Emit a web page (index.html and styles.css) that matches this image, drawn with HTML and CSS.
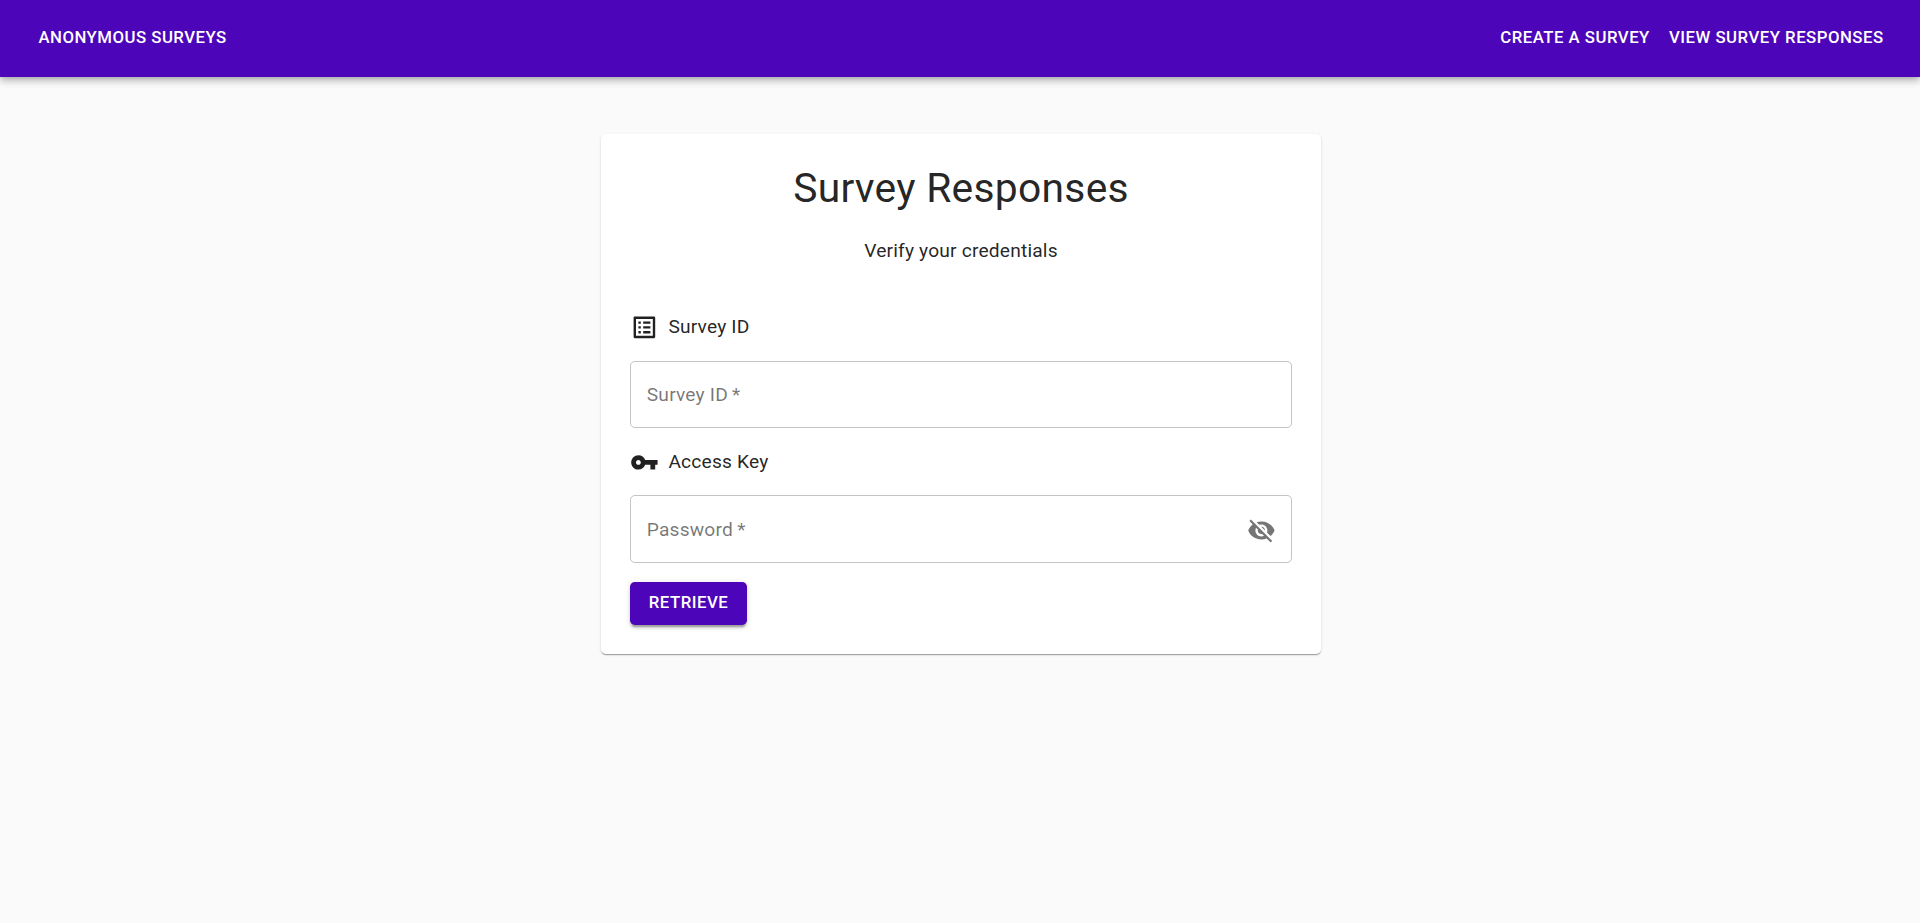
FILE: index.html
```html
<!DOCTYPE html>
<html lang="en">
<head>
<meta charset="utf-8">
<title>Anonymous Surveys</title>
<link rel="stylesheet" href="styles.css">
</head>
<body>
<header class="app-bar">
  <a class="nav-link">Anonymous Surveys</a>
  <nav class="nav">
    <a class="nav-link">Create a Survey</a>
    <a class="nav-link">View Survey Responses</a>
  </nav>
</header>
<main class="content">
  <form class="card">
    <h1 class="title">Survey Responses</h1>
    <p class="subtitle">Verify your credentials</p>
    <div class="label">
      <svg class="icon" viewBox="0 0 24 24"><path d="M19 5v14H5V5h14m1.1-2H3.9c-.5 0-.9.4-.9.9v16.2c0 .4.4.9.9.9h16.2c.4 0 .9-.5.9-.9V3.9c0-.5-.5-.9-.9-.9zM11 7h6v2h-6V7zm0 4h6v2h-6v-2zm0 4h6v2h-6zM7 7h2v2H7zm0 4h2v2H7zm0 4h2v2H7z"/></svg>
      <span>Survey ID</span>
    </div>
    <div class="field"><span>Survey ID<span class="mark"> *</span></span></div>
    <div class="label label-key">
      <svg class="icon" viewBox="0 0 24 24"><path d="M12.65 10C11.83 7.67 9.61 6 7 6c-3.31 0-6 2.69-6 6s2.69 6 6 6c2.61 0 4.83-1.67 5.65-4H17v4h4v-4h2v-4H12.65zM7 14c-1.1 0-2-.9-2-2s.9-2 2-2 2 .9 2 2-.9 2-2 2z"/></svg>
      <span>Access Key</span>
    </div>
    <div class="field field-password">
      <span>Password<span class="mark"> *</span></span>
      <svg class="icon" viewBox="0 0 24 24"><path d="M12 7c2.76 0 5 2.24 5 5 0 .65-.13 1.26-.36 1.83l2.92 2.92c1.51-1.26 2.7-2.89 3.43-4.75-1.73-4.39-6-7.5-11-7.5-1.4 0-2.74.25-3.98.7l2.16 2.16C10.74 7.13 11.35 7 12 7zM2 4.27l2.28 2.28.46.46C3.08 8.3 1.78 10.02 1 12c1.73 4.39 6 7.5 11 7.5 1.55 0 3.03-.3 4.38-.84l.42.42L19.73 22 21 20.73 3.27 3 2 4.27zM7.53 9.8l1.55 1.55c-.05.21-.08.43-.08.65 0 1.66 1.34 3 3 3 .22 0 .44-.03.65-.08l1.55 1.55c-.67.33-1.41.53-2.2.53-2.76 0-5-2.24-5-5 0-.79.2-1.53.53-2.2zm4.31-.78l3.15 3.15.02-.16c0-1.66-1.34-3-3-3l-.17.01z"/></svg>
    </div>
    <button class="button" type="button">Retrieve</button>
  </form>
</main>
</body>
</html>
```
FILE: styles.css
```css
* { box-sizing: border-box; }

body {
  margin: 0;
  min-height: 100vh;
  background: #fafafa;
  font-family: Roboto, "Liberation Sans", sans-serif;
  font-size: 19.2px;
  line-height: 28.8px;
  letter-spacing: 0.00938em;
  color: rgba(0, 0, 0, 0.87);
}

.app-bar {
  position: relative;
  display: flex;
  align-items: center;
  justify-content: space-between;
  height: 77px;
  padding: 0 36.4px 3px 38.4px;
  background: #4d05b9;
  box-shadow: 0 2.4px 4.8px -1.2px rgba(0, 0, 0, 0.2),
    0 4.8px 6px 0 rgba(0, 0, 0, 0.14),
    0 1.2px 12px 0 rgba(0, 0, 0, 0.12);
}

.nav {
  display: flex;
  gap: 19.2px;
}

.nav-link,
.button {
  font-size: 16.8px;
  font-weight: 500;
  letter-spacing: 0.02857em;
  text-transform: uppercase;
  color: #fff;
}

.content {
  display: flex;
  justify-content: center;
  padding: 57px 0 48px 2px;
}

.card {
  width: 720px;
  height: 520px;
  padding: 29px 29px 0;
  background: #fff;
  border-radius: 4.8px;
  box-shadow: 0 2px 1px -1px rgba(0, 0, 0, 0.2),
    0 1px 1px 0 rgba(0, 0, 0, 0.14),
    0 1px 3px 0 rgba(0, 0, 0, 0.12);
}

.title {
  margin: 0 0 23px;
  font-size: 40.8px;
  font-weight: 400;
  line-height: 50px;
  letter-spacing: 0.0065em;
  text-align: center;
}

.subtitle {
  margin: 0 0 48px;
  line-height: 29px;
  text-align: center;
}

.label {
  display: flex;
  gap: 9.6px;
  height: 29px;
  margin-bottom: 19px;
}

.label-key {
  margin: 20px 0 18px;
}

.icon {
  width: 28.8px;
  height: 28.8px;
  flex: none;
  fill: currentColor;
}

.field {
  display: flex;
  align-items: center;
  justify-content: space-between;
  height: 67px;
  padding: 1px 15.2px 0 15.8px;
  border: 1px solid rgba(0, 0, 0, 0.23);
  border-radius: 4.8px;
  color: rgba(0, 0, 0, 0.54);
}

.field-password {
  height: 68px;
  padding-top: 2px;
}

.mark {
  margin-left: -0.8px;
}

.button {
  display: block;
  width: 117px;
  height: 43px;
  margin-top: 19px;
  padding: 0 0 3px;
  border: 0;
  border-radius: 4.8px;
  background: #4d05b9;
  font-family: inherit;
  box-shadow: 0 3.6px 1.2px -2.4px rgba(0, 0, 0, 0.2),
    0 2.4px 2.4px 0 rgba(0, 0, 0, 0.14),
    0 1.2px 6px 0 rgba(0, 0, 0, 0.12);
}
```
